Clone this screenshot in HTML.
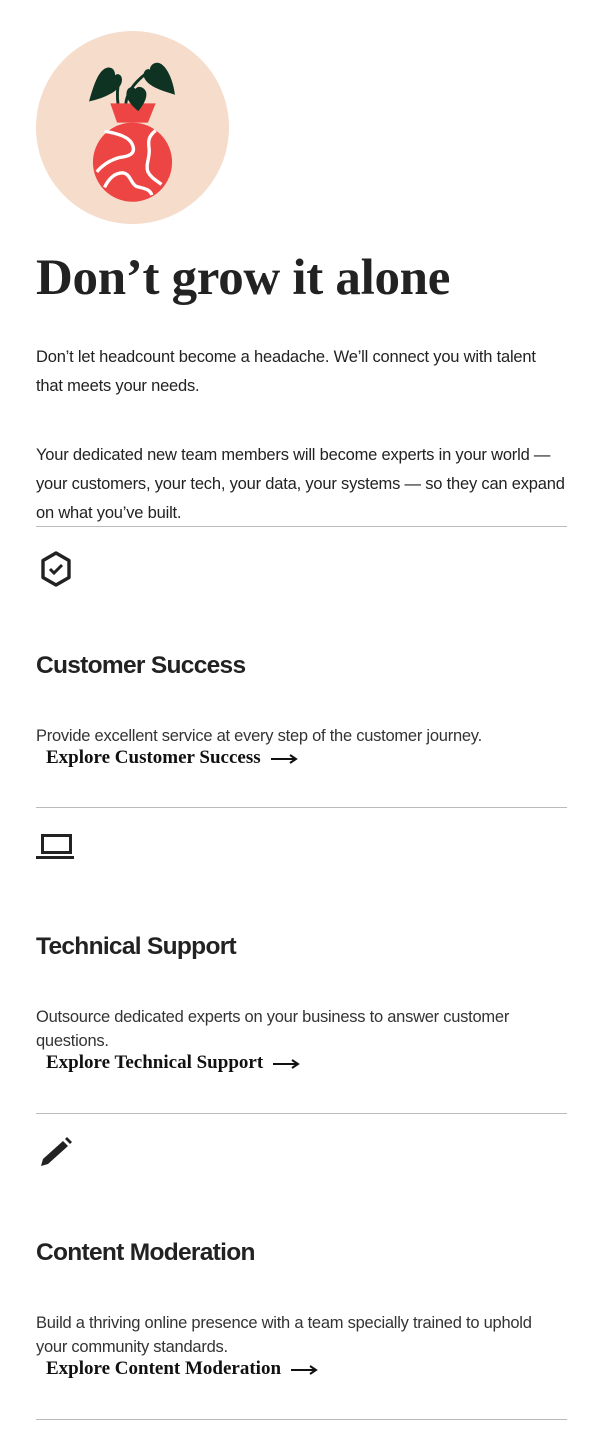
<!DOCTYPE html>
<html><head><meta charset="utf-8"><style>
body{margin:0;width:604px;height:1439px;background:#fff;position:relative;overflow:hidden;color:#222;font-family:"Liberation Sans",sans-serif}
.a{position:absolute;left:36px;white-space:nowrap}
.p{font-size:16.5px;line-height:29px;letter-spacing:-0.2px;color:#222}
.h2{font-size:24.5px;font-weight:bold;letter-spacing:-0.7px;color:#222}
.d{font-size:16.5px;line-height:24px;letter-spacing:-0.25px;color:#333}
.l{font-family:"Liberation Serif",serif;font-weight:bold;font-size:19px;left:46px;color:#111}
.hr{position:absolute;left:36px;width:531px;height:1px;background:#bbb}
.ar{display:inline-block;vertical-align:middle;margin-left:10px}
</style></head><body>
<svg class="a" style="left:36px;top:31px" width="193" height="193" viewBox="0 0 200 200">
<circle cx="100" cy="100" r="100" fill="#f6dccb"/>
<path d="M86 52 C84 60 84 68 85 76" stroke="#0f3322" stroke-width="3" fill="none"/>
<path d="M114 44 C100 55 94 65 93 76" stroke="#0f3322" stroke-width="3" fill="none"/>
<path d="M55 73 C60 55 65 40 74 38 C80 37 82 42 82 46 C84 43 90 45 89 52 C88 62 70 70 55 73Z" fill="#0f3322"/>
<path d="M144 66 C142 50 135 35 127 33 C122 32 118 36 118 40 C115 38 110 42 112 48 C116 58 132 62 144 66Z" fill="#0f3322"/>
<path d="M77 75 L124 75 L116 95 L84 95Z" fill="#ec4544"/>
<path d="M106 83 C100 78 92 70 94 63 C95 58 100 57 103 60 C106 56 112 58 114 63 C116 70 110 78 106 83Z" fill="#0f3322"/>
<circle cx="100" cy="136" r="41" fill="#ec4544"/>
<path d="M71 104 C85 106 97 110 100 118 C104 128 95 130 87 131 C76 134 68 140 63 146" stroke="#fff" stroke-width="3.5" fill="none"/>
<path d="M124 103 C118 108 116 112 117 120 C119 130 113 138 116 146 C119 152 125 155 130 159" stroke="#fff" stroke-width="3.5" fill="none"/>
<path d="M71 162 C76 152 82 147 90 147 C98 148 98 158 104 161 C110 163 118 163 120 170" stroke="#fff" stroke-width="3.5" fill="none"/>
</svg>
<div class="a" style="top:248px;font-family:'Liberation Serif',serif;font-weight:bold;font-size:51px;line-height:60px;letter-spacing:-0.3px;color:#222">Don’t grow it alone</div>
<div class="a p" style="top:343px">Don’t let headcount become a headache. We’ll connect you with talent<br>that meets your needs.</div>
<div class="a p" style="top:441px">Your dedicated new team members will become experts in your world —<br>your customers, your tech, your data, your systems — so they can expand<br>on what you’ve built.</div>
<div class="hr" style="top:526px"></div>
<svg class="a" style="top:550px;left:38px" width="36" height="38" viewBox="0 0 36 38"><path d="M18 3 L31 10.5 L31 27.5 L18 35 L5 27.5 L5 10.5Z" fill="none" stroke="#222" stroke-width="3.4" stroke-linejoin="round"/><path d="M12 19 L16 23 L24 15" fill="none" stroke="#222" stroke-width="3"/></svg>
<div class="a h2" style="top:652px">Customer Success</div>
<div class="a d" style="top:724px">Provide excellent service at every step of the customer journey.</div>
<div class="a l" style="top:747px">Explore Customer Success<svg class="ar" width="28" height="10"><path d="M0 5 H24 M19 1 L25 5 L19 9" stroke="#111" stroke-width="2" fill="none"/></svg></div>
<div class="hr" style="top:807px"></div>
<svg class="a" style="top:830px" width="40" height="32"><rect x="6.5" y="5.5" width="28" height="17" fill="none" stroke="#222" stroke-width="3"/><rect x="0" y="26" width="38" height="3" fill="#222"/></svg>
<div class="a h2" style="top:933px">Technical Support</div>
<div class="a d" style="top:1005px">Outsource dedicated experts on your business to answer customer<br>questions.</div>
<div class="a l" style="top:1052px">Explore Technical Support<svg class="ar" width="28" height="10"><path d="M0 5 H24 M19 1 L25 5 L19 9" stroke="#111" stroke-width="2" fill="none"/></svg></div>
<div class="hr" style="top:1113px"></div>
<svg class="a" style="top:1136px;left:38px" width="36" height="34" viewBox="0 0 36 34"><path d="M3 30 L5 23 L25 5 L30 10 L10 28Z" fill="#222"/><path d="M27 3 L29 1 L34 6 L32 8Z" fill="#222"/></svg>
<div class="a h2" style="top:1239px">Content Moderation</div>
<div class="a d" style="top:1311px">Build a thriving online presence with a team specially trained to uphold<br>your community standards.</div>
<div class="a l" style="top:1358px">Explore Content Moderation<svg class="ar" width="28" height="10"><path d="M0 5 H24 M19 1 L25 5 L19 9" stroke="#111" stroke-width="2" fill="none"/></svg></div>
<div class="hr" style="top:1419px"></div>
</body></html>
